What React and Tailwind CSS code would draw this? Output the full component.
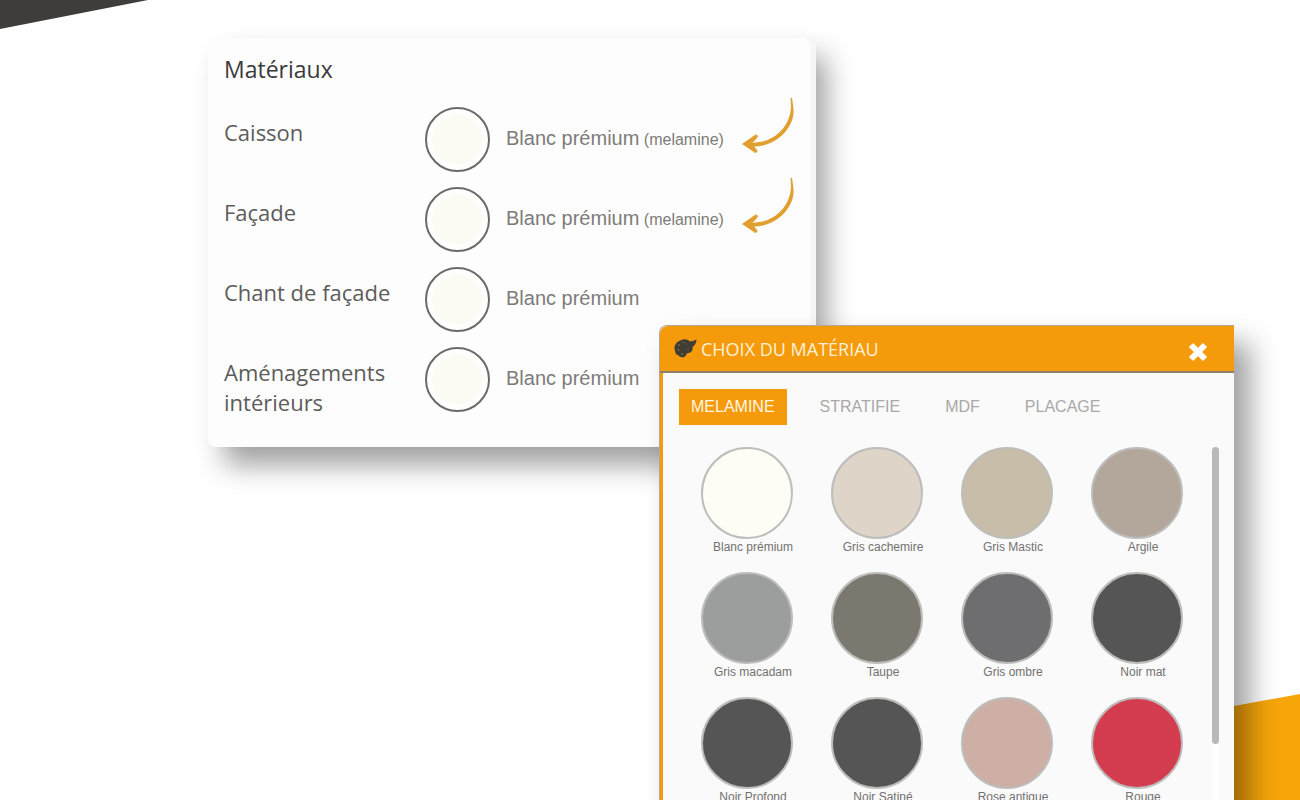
import { useState } from "react";

const parts = [
  { label: "Caisson", value: "Blanc prémium", type: "melamine" },
  { label: "Façade", value: "Blanc prémium", type: "melamine" },
  { label: "Chant de façade", value: "Blanc prémium" },
  { label: "Aménagements intérieurs", value: "Blanc prémium" },
];

const tabs = ["MELAMINE", "STRATIFIE", "MDF", "PLACAGE"];

const materials = [
  { name: "Blanc prémium", color: "bg-[#fdfdf5]" },
  { name: "Gris cachemire", color: "bg-[#ded4c8]" },
  { name: "Gris Mastic", color: "bg-[#c7bda9]" },
  { name: "Argile", color: "bg-[#b3a79b]" },
  { name: "Gris macadam", color: "bg-[#9b9e9d]" },
  { name: "Taupe", color: "bg-[#7b7870]" },
  { name: "Gris ombre", color: "bg-[#6e6e70]" },
  { name: "Noir mat", color: "bg-[#555555]" },
  { name: "Noir Profond", color: "bg-[#555555]" },
  { name: "Noir Satiné", color: "bg-[#555555]" },
  { name: "Rose antique", color: "bg-[#cdafa5]" },
  { name: "Rouge", color: "bg-[#d33d4f]" },
];

function Arrow() {
  return (
    <svg
      className="-mt-2.5 ml-[18px] h-[58px] w-[54px] shrink-0 self-start"
      viewBox="0 0 54 58"
      fill="#e0a02f"
      aria-hidden="true"
    >
      <path d="M48.500 1 L50 1 C50.500 6 52.500 12 51 20 C47 37 29 51 8 49.500 L8 45.500 C27 47 43 35 47.500 19 C49.500 12 49 7 48.500 1Z" />
      <path d="M0 47 L13.500 37.500 C16 37.500 16.500 40 15 41 L10 46.500 L15 53 C16 55 14.500 56.500 12.500 55.500Z" />
    </svg>
  );
}

function PaletteIcon() {
  return (
    <svg
      className="h-[19px] w-[23px] shrink-0"
      viewBox="0 0 23 19"
      fill="#403d36"
      aria-hidden="true"
    >
      <path d="M9 .5 C12 0 14 1 16 2.500 C18 2.500 20 1.500 22.500 .5 C22.500 4 21 6 18.500 8 C19 11 18 13 15 14 C12 14 12.500 16 11 17.500 C8 19.500 5 17.500 3.500 15.500 L2 15.500 L1.500 13.500 C0 10 0 6 3 3.500 C5 1.500 7 1 9 .5Z" />
      <g fill="#c98a25">
        <circle cx="5" cy="6" r=".7" />
        <circle cx="9" cy="3.500" r=".6" />
        <circle cx="4.500" cy="11" r=".7" />
        <circle cx="8" cy="15" r=".7" />
        <circle cx="12" cy="5" r=".5" />
        <circle cx="14" cy="10" r=".5" />
      </g>
    </svg>
  );
}

function MaterialsCard() {
  return (
    <section className="ml-[16%] w-full max-w-[602px] rounded-lg bg-[#fdfdfd] px-4 pt-4 pb-[35px] shadow-[6px_0_0_0_#f6f6f6,16px_18px_28px_rgba(0,0,0,0.38)]">
      <h1 className="mb-[23px] font-['Open_Sans',sans-serif] text-[23px] leading-[30px] text-[#3a3a3a]">
        Matériaux
      </h1>
      <div className="flex flex-col gap-[15px]">
        {parts.map((part) => (
          <div key={part.label} className="flex h-[65px] items-center">
            <div className="w-[201px] shrink-0 self-start pt-2.5 font-['Open_Sans',sans-serif] text-[22px] leading-[30px] text-[#5c5c5a]">
              {part.label}
            </div>
            <button
              aria-label={`${part.label} : ${part.value}`}
              className="flex size-[65px] shrink-0 items-center justify-center rounded-full border-2 border-[#6a6a69] bg-white"
            >
              <span className="size-[51px] rounded-full bg-[#fcfcf4]" />
            </button>
            <p className="ml-4 pb-1 text-xl whitespace-nowrap text-[#7d7b79]">
              {part.value}
              {part.type && <span className="text-base"> ({part.type})</span>}
            </p>
            {part.type && <Arrow />}
          </div>
        ))}
      </div>
    </section>
  );
}

function MaterialPicker() {
  const [tab, setTab] = useState("MELAMINE");

  return (
    <div
      role="dialog"
      aria-labelledby="picker-title"
      className="absolute top-[325px] left-1/2 ml-[9px] w-[575px] rounded-tl-lg border-t border-l border-[#b5a898] bg-[#fafafa] shadow-[16px_18px_28px_rgba(0,0,0,0.38)]"
    >
      <header className="flex h-[47px] items-center rounded-tl-lg border-b-2 border-[#8d8068] bg-[#f59b0b] pr-[26px] pl-3.5">
        <PaletteIcon />
        <h2
          id="picker-title"
          className="ml-1 font-['Open_Sans',sans-serif] text-lg leading-6 text-[#fdf0d8]"
        >
          CHOIX DU MATÉRIAU
        </h2>
        <button aria-label="Fermer" className="mt-1.5 ml-auto">
          <svg
            className="size-5"
            viewBox="0 0 20 20"
            stroke="#fff"
            strokeWidth="6"
            aria-hidden="true"
          >
            <path d="M3 3 L17 17 M17 3 L3 17" />
          </svg>
        </button>
      </header>

      <div className="border-l-3 border-[#f59b0b] pt-4 pb-5">
        <div className="flex gap-[21px] pl-4">
          {tabs.map((name) => (
            <button
              key={name}
              onClick={() => setTab(name)}
              className={`h-9 px-3 text-base ${
                tab === name ? "bg-[#f59b0b] text-[#fff6e6]" : "text-[#a9a8a7]"
              }`}
            >
              {name}
            </button>
          ))}
        </div>

        <div className="mt-[22px] flex gap-1 pr-[15px] pl-[25px]">
          <div className="grid flex-1 grid-cols-4 gap-y-[17px]">
            {materials.map((m) => (
              <button key={m.name} className="flex flex-col">
                <span
                  className={`ml-[13px] size-[92px] rounded-full border-2 border-[#bdbdbb] ${m.color}`}
                />
                <span className="w-full text-center text-xs leading-4 text-[#737170]">
                  {m.name}
                </span>
              </button>
            ))}
          </div>
          <div className="w-[7px] rounded-full bg-white">
            <div className="h-[297px] rounded-sm bg-[#b9b9b9]" />
          </div>
        </div>
      </div>
    </div>
  );
}

export default function App() {
  return (
    <main className="relative min-h-screen overflow-hidden bg-white pt-[38px] font-['Liberation_Sans',sans-serif]">
      {/* slanted corners in the background */}
      <svg
        className="absolute top-0 left-0 h-[29px] w-[148px]"
        viewBox="0 0 148 29"
        aria-hidden="true"
      >
        <path d="M0 0H148L0 29Z" fill="#3f3d3a" />
      </svg>
      <svg
        className="absolute right-0 bottom-0 h-[106px] w-[66px]"
        viewBox="0 0 66 106"
        aria-hidden="true"
      >
        <path d="M0 12L66 0V106H0Z" fill="#f6a609" />
      </svg>

      <MaterialsCard />
      <MaterialPicker />
    </main>
  );
}
